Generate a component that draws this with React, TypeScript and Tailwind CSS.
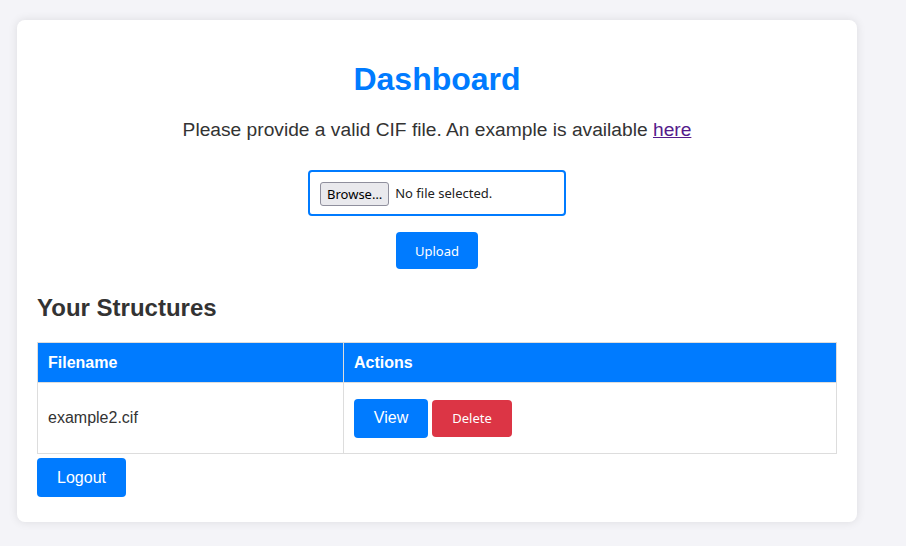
export default function App() {
  const btnFont = { fontFamily: '"Noto Sans", "Open Sans", sans-serif' };
  return (
    <div className="min-h-[546px] bg-[#f4f4f8] px-[17px] py-5 font-['Liberation_Sans',Arial,sans-serif] text-[#333]">
      <div className="w-[840px] rounded-lg bg-white p-5 shadow-[0_0_10px_rgba(0,0,0,0.1)]">
        <h1 className="mt-5 text-center text-[32px] font-bold leading-[38px] text-[#007bff]">Dashboard</h1>
        <p className="mt-[18px] text-center text-[19.2px] leading-[27px]">
          Please provide a valid CIF file. An example is available{" "}
          <a href="#" className="text-[#551a8b] underline">here</a>
        </p>
        <form className="mt-[27px] flex flex-col items-center" onSubmit={(e) => e.preventDefault()}>
          <div className="flex h-[46px] w-[258px] items-center gap-[6px] rounded-[4px] border-2 border-[#007bff] px-[10px] pt-[2px]" style={btnFont}>
            <span className="rounded-[3px] border border-[#8f8f9d] bg-[#e9e9ed] px-[6px] py-[2px] text-[13px] leading-[18px] text-black">Browse…</span>
            <span className="text-[13px] text-[#222]">No file selected.</span>
          </div>
          <button type="submit" className="mt-4 h-[37px] w-[82px] rounded-[4px] bg-[#007bff] pt-[2px] text-[13px] text-white" style={btnFont}>
            Upload
          </button>
        </form>
        <h2 className="mt-[24px] text-[24px] font-bold leading-[29px]">Your Structures</h2>
        <table className="mt-5 w-full border-collapse text-[16px]">
          <thead>
            <tr className="bg-[#007bff] text-left text-white">
              <th className="h-[40px] w-[306px] border border-[#ddd] px-[10px] font-bold">Filename</th>
              <th className="h-[40px] border border-[#ddd] px-[10px] font-bold">Actions</th>
            </tr>
          </thead>
          <tbody>
            <tr>
              <td className="h-[71px] border border-[#ddd] px-[10px]">example2.cif</td>
              <td className="h-[71px] border border-[#ddd] px-[10px]">
                <div className="flex items-center gap-1">
                  <button className="h-[39px] w-[74px] rounded-[4px] bg-[#007bff] text-[16px] text-white">View</button>
                  <button className="h-[37px] w-[80px] rounded-[4px] bg-[#dc3545] pt-[2px] text-[13px] text-white" style={btnFont}>Delete</button>
                </div>
              </td>
            </tr>
          </tbody>
        </table>
        <button className="mt-[4px] mb-[5px] h-[39px] w-[89px] rounded-[4px] bg-[#007bff] text-[16px] text-white">Logout</button>
      </div>
    </div>
  );
}
